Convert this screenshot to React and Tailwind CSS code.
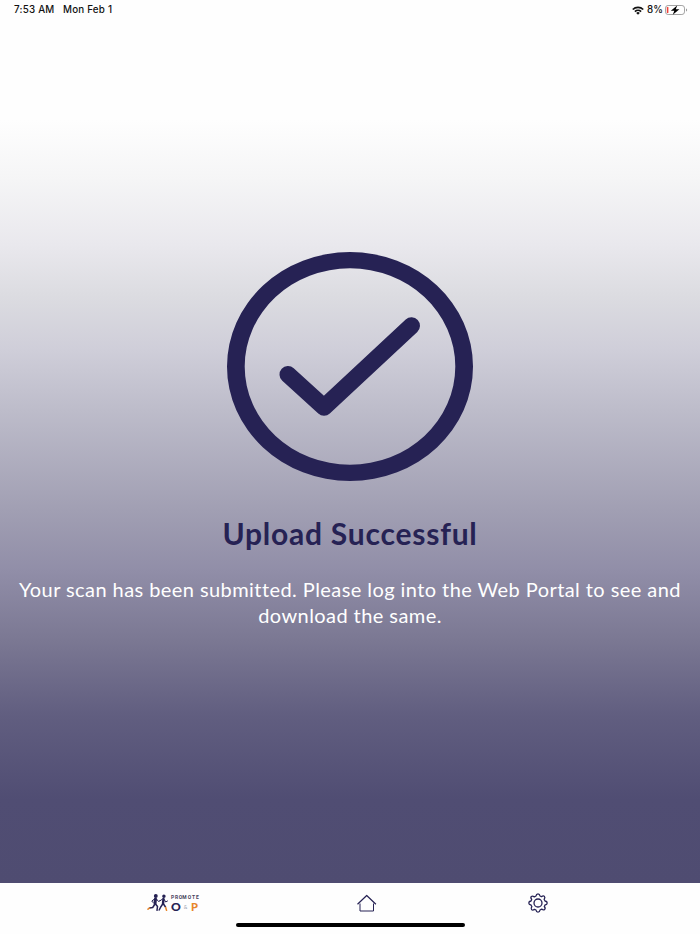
import React from 'react';

const WifiIcon = () => (
  <svg className="w-[12px] h-[9px]" viewBox="0 0 24 18" fill="none" stroke="#111" strokeWidth="3.4">
    <path d="M1.5 7a15 15 0 0 1 21 0" />
    <path d="M5.8 11.2a9 9 0 0 1 12.4 0" />
    <path d="M12 17.5l-3.6-3.7a5 5 0 0 1 7.2 0z" fill="#111" stroke="none" />
  </svg>
);

const BatteryIcon = () => (
  <svg className="w-[23px] h-[10px]" viewBox="0 0 23 10" fill="none">
    <rect x="0.5" y="0.5" width="19" height="9" rx="2.6" stroke="#a3a3a3" />
    <rect x="1.8" y="2" width="1.6" height="6" rx="0.6" fill="#f0443a" />
    <path d="M21 3.5v3c.7-.2 1.1-.8 1.1-1.5S21.700 3.700 21 3.500z" fill="#999" />
    <path d="M12.200 .4L5.800 5.700h3.500L7.800 9.700l6.600-5.400h-3.600z" fill="#000" />
  </svg>
);

const CheckCircle = () => (
  <svg className="w-[246px] h-[229px]" viewBox="0 0 246 229" fill="none" stroke="#262254">
    <path
      d="M123 0a123 114.500 0 1 0 0 229a123 114.500 0 1 0 0-229zM123 16.300a105.300 98.200 0 1 1 0 196.400a105.300 98.200 0 1 1 0-196.400z"
      fill="#262254"
      fillRule="evenodd"
      stroke="none"
    />
    <path d="M61 122.500l36 32.700l87.500-81.500" strokeWidth="17" strokeLinecap="round" strokeLinejoin="round" />
  </svg>
);

const Runners = () => (
  <svg className="w-[22px] h-[18px]" viewBox="0 0 22 18" fill="none" strokeLinecap="round" strokeLinejoin="round">
    <g stroke="#262254" strokeWidth="1.500">
      <circle cx="8.800" cy="2" r="1.200" fill="#262254" />
      <path d="M8.500 5L8 9.500" strokeWidth="3" />
      <path d="M7.500 5L4.800 7l1.200 1.500M9.500 5l2 2.500 1.500-1" strokeWidth="1" />
      <path d="M8 10l-2.300 3.500-3.200.5M8.500 10l2 2.500-.5 3.800" />
      <circle cx="16.900" cy="2.300" r="1" fill="#262254" />
      <path d="M16.500 5l-.5 4.500" strokeWidth="2.400" />
      <path d="M15.500 5l-2.600 2M17.200 5.500l1.500 2.500 1.800-1" strokeWidth="1" />
      <path d="M15.700 10l-2 3-1.500 3M16.500 10l2 3" />
    </g>
    <path d="M2.500 14l-1.500 1.200M18.700 13.500l.8 2.800" stroke="#e8862a" strokeWidth="1.500" />
  </svg>
);

const Logo = () => (
  <div className="flex w-[52px] h-[18px] text-[#262254]">
    <Runners />
    <div className="ml-[2px] w-[28px]">
      <div className="flex justify-between text-[5.500px] leading-[7px] font-bold text-[#45435c] font-['Roboto',sans-serif]">
        {'PROMOTE'.split('').map((letter, index) => (
          <span key={index} className="-mx-px w-[5px] text-center scale-x-90">{letter}</span>
        ))}
      </div>
      <div className="mt-px flex items-center justify-between text-[11px] leading-[10px] font-black font-['Lato',sans-serif]">
        <span className="inline-block w-[9px] origin-left scale-x-110">O</span>
        <span className="text-[5px] font-normal text-gray-400">&amp;</span>
        <span className="mr-[1px] text-[#e8862a]">P</span>
      </div>
    </div>
  </div>
);

const HomeIcon = () => (
  <svg className="w-[20px] h-[18px]" viewBox="0 0 20 18" fill="none" stroke="#262254" strokeLinejoin="round">
    <path d="M.5 10.200L9.700 1.500l9.200 8.700" strokeWidth="1.200" />
    <path d="M3 9.500v7.500h13.500V9.500" strokeWidth="1" />
  </svg>
);

const GearIcon = () => (
  <svg className="w-[20px] h-[20px]" viewBox="0 0 20 20" fill="none" stroke="#262254" strokeWidth="1.300" strokeLinejoin="round">
    <path d="M8 3Q8.300.8 10 .8t2 2.200l1.500.7q1.800-1.500 2.900-.3t-.3 2.900L17 8q2.200.3 2.200 2t-2.200 2l-.7 1.500q1.500 1.800.3 2.900t-2.900-.3L12 17q-.3 2.200-2 2.200t-2-2.200l-1.500-.7q-1.800 1.500-2.900.3t.3-2.900L3 12q-2.200-.3-2.200-2t2.200-2l.7-1.500q-1.500-1.800-.3-2.900t2.900.3z" />
    <circle cx="10" cy="10" r="4" />
  </svg>
);

const StatusBar = () => (
  <div className="h-5 pl-[14px] pr-[12px] flex items-center justify-between text-[9.8px] font-medium text-[#111] font-['Inter',sans-serif]">
    <div className="flex gap-[8.500px] tracking-[0.22px]">
      <span>7:53 AM</span>
      <span>Mon Feb 1</span>
    </div>
    <div className="flex items-center">
      <WifiIcon />
      <span className="ml-[3px] mr-[2px]">8%</span>
      <BatteryIcon />
    </div>
  </div>
);

const TabBar = () => (
  <div className="h-[51px] bg-[#fefefe] flex flex-col items-center justify-between">
    <div className="w-full h-[39px] flex items-center">
      <div className="ml-[147px]"><Logo /></div>
      <div className="ml-[158px]"><HomeIcon /></div>
      <div className="ml-[151px]"><GearIcon /></div>
    </div>
    <div className="mb-[7px] w-[229px] h-[4px] rounded-full bg-black" />
  </div>
);

export default function App() {
  return (
    <div className="h-screen flex flex-col overflow-hidden bg-white font-['Lato',sans-serif]">
      <div className="flex-1 flex flex-col items-center bg-[linear-gradient(to_bottom,#fefefe_0px,#fefefe_120px,#f5f5f6_180px,#e9e8ed_245px,#dcdce1_295px,#cfced9_350px,#bdbcca_410px,#a19fb3_510px,#918ea8_570px,#7b7893_640px,#615e80_715px,#504d73_800px,#4f4c71_883px)]">
        <div className="w-full">
          <StatusBar />
        </div>
        <div className="mt-[232px]">
          <CheckCircle />
        </div>
        <h1 className="mt-[32px] text-[30px] leading-[40px] tracking-[0.77px] font-bold text-[#262254] whitespace-nowrap">Upload Successful</h1>
        <p className="mt-[24px] text-[20px] leading-[25.500px] tracking-[0.43px] text-center text-white whitespace-nowrap">
          Your scan has been submitted. Please log into the Web Portal to see and
          <br />
          download the same.
        </p>
      </div>
      <TabBar />
    </div>
  );
}
